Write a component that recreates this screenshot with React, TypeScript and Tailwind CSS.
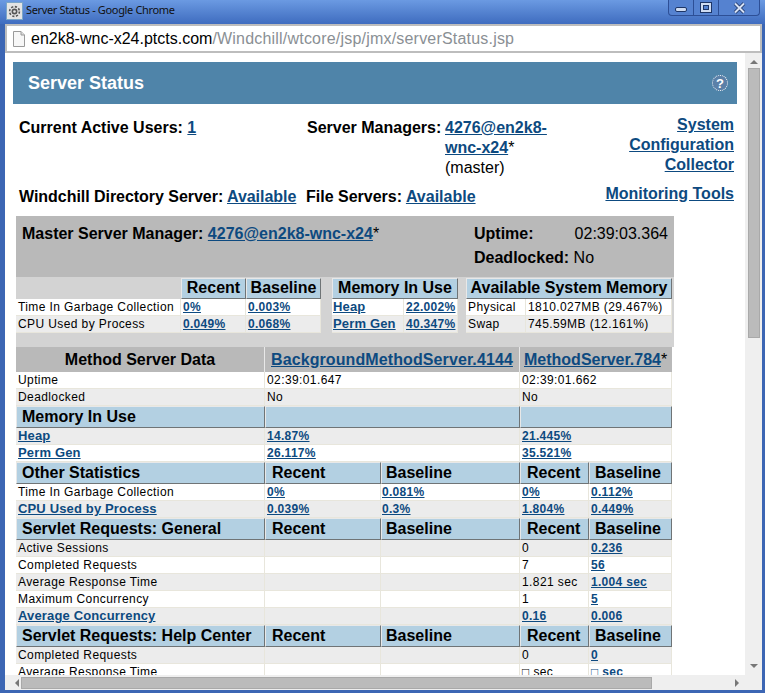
import { ReactNode } from "react";

type Cell = { text?: string; link?: boolean; suffix?: string };
type Row = { kind: "head" | "data"; cells: Cell[] };

const t = (text: string): Cell => ({ text });
const l = (text: string): Cell => ({ text, link: true });
const e: Cell = {};

const methodRows: Row[] = [
  { kind: "data", cells: [t("Uptime"), t("02:39:01.647"), t("02:39:01.662")] },
  { kind: "data", cells: [t("Deadlocked"), t("No"), t("No")] },
  { kind: "head", cells: [t("Memory In Use"), e, e] },
  { kind: "data", cells: [l("Heap"), l("14.87%"), l("21.445%")] },
  { kind: "data", cells: [l("Perm Gen"), l("26.117%"), l("35.521%")] },
  { kind: "head", cells: [t("Other Statistics"), t("Recent"), t("Baseline"), t("Recent"), t("Baseline")] },
  { kind: "data", cells: [t("Time In Garbage Collection"), l("0%"), l("0.081%"), l("0%"), l("0.112%")] },
  { kind: "data", cells: [l("CPU Used by Process"), l("0.039%"), l("0.3%"), l("1.804%"), l("0.449%")] },
  { kind: "head", cells: [t("Servlet Requests: General"), t("Recent"), t("Baseline"), t("Recent"), t("Baseline")] },
  { kind: "data", cells: [t("Active Sessions"), e, e, t("0"), l("0.236")] },
  { kind: "data", cells: [t("Completed Requests"), e, e, t("7"), l("56")] },
  { kind: "data", cells: [t("Average Response Time"), e, e, t("1.821 sec"), l("1.004 sec")] },
  { kind: "data", cells: [t("Maximum Concurrency"), e, e, t("1"), l("5")] },
  { kind: "data", cells: [l("Average Concurrency"), e, e, l("0.16"), l("0.006")] },
  { kind: "head", cells: [t("Servlet Requests: Help Center"), t("Recent"), t("Baseline"), t("Recent"), t("Baseline")] },
  { kind: "data", cells: [t("Completed Requests"), e, e, t("0"), l("0")] },
  { kind: "data", cells: [t("Average Response Time"), e, e, t("□ sec"), l("□ sec")] },
];

const headPad = ["pl-[5px]", "pl-[6px]", "pl-[4px]", "pl-[6px]", "pl-[5px]"];

const A = ({ children, className = "" }: { children: ReactNode; className?: string }) => (
  <a href="#" className={`text-[#0d4a80] underline ${className}`}>
    {children}
  </a>
);

// bold link used for row labels, a touch larger than the values
const LabelLink = ({ children }: { children: ReactNode }) => (
  <A className="text-[13px] font-bold tracking-[0.15px]">{children}</A>
);

const Th = ({ children, className = "", colSpan }: { children?: ReactNode; className?: string; colSpan?: number }) => (
  <td
    colSpan={colSpan}
    className={`border-t border-l border-t-[#e8e8e8] border-l-[#e8e8e8] border-r border-b border-r-[#6f7476] border-b-[#6f7476] bg-[#b3d0e2] p-0 text-[16px] font-bold leading-[18px] whitespace-nowrap text-black ${className}`}
  >
    {children}
  </td>
);

const Td = ({ children, className = "pl-[2px]", colSpan }: { children?: ReactNode; className?: string; colSpan?: number }) => (
  <td
    colSpan={colSpan}
    className={`h-[17px] border-r border-b border-[#e8e6dc] py-0 pr-[2px] text-[12px] leading-[16px] tracking-[0.4px] whitespace-nowrap ${className}`}
  >
    {children}
  </td>
);

function MethodRow({ row, index }: { row: Row; index: number }) {
  const wide = row.cells.length === 3;
  const stripe = index % 2 === 0 ? "bg-white" : "bg-[#ececec]";
  if (row.kind === "head") {
    return (
      <tr>
        {row.cells.map((c, i) => (
          <Th key={i} colSpan={wide && i > 0 ? 2 : undefined} className={`h-[22px] ${headPad[i]}`}>
            {c.text}
          </Th>
        ))}
      </tr>
    );
  }
  return (
    <tr className={stripe}>
      {row.cells.map((c, i) => (
        <Td key={i} colSpan={wide && i > 0 ? 2 : undefined} className={!wide && i === 2 ? "pl-[1px]" : "pl-[2px]"}>
          {c.link && i === 0 && <LabelLink>{c.text}</LabelLink>}
          {c.link && i > 0 && <A className="font-bold tracking-[0.3px]">{c.text}</A>}
          {!c.link && c.text}
        </Td>
      ))}
    </tr>
  );
}

function SummaryTables() {
  return (
    <div className="flex h-[70px] bg-[#d3d3d3] pt-px">
      <table className="w-[305px] table-fixed border-separate border-spacing-0 self-start">
        <colgroup>
          <col className="w-[165px]" />
          <col className="w-[65px]" />
          <col className="w-[75px]" />
        </colgroup>
        <tbody>
          <tr>
            <td />
            <Th className="h-[21px] pb-px text-center">Recent</Th>
            <Th className="h-[21px] pb-px text-center">Baseline</Th>
          </tr>
          <tr className="bg-white">
            <Td>Time In Garbage Collection</Td>
            <Td><A className="font-bold tracking-[0.3px]">0%</A></Td>
            <Td><A className="font-bold tracking-[0.3px]">0.003%</A></Td>
          </tr>
          <tr className="bg-[#ececec]">
            <Td>CPU Used by Process</Td>
            <Td><A className="font-bold tracking-[0.3px]">0.049%</A></Td>
            <Td><A className="font-bold tracking-[0.3px]">0.068%</A></Td>
          </tr>
        </tbody>
      </table>
      <table className="ml-[11px] w-[126px] table-fixed border-separate border-spacing-0 self-start">
        <colgroup>
          <col className="w-[72px]" />
          <col className="w-[54px]" />
        </colgroup>
        <tbody>
          <tr>
            <Th colSpan={2} className="h-[21px] pb-px text-center">Memory In Use</Th>
          </tr>
          <tr className="bg-white">
            <Td className="pl-[1px]"><LabelLink>Heap</LabelLink></Td>
            <Td><A className="font-bold tracking-[0.3px]">22.002%</A></Td>
          </tr>
          <tr className="bg-[#ececec]">
            <Td className="pl-[1px]"><LabelLink>Perm Gen</LabelLink></Td>
            <Td><A className="font-bold tracking-[0.3px]">40.347%</A></Td>
          </tr>
        </tbody>
      </table>
      <table className="ml-[8px] w-[206px] table-fixed border-separate border-spacing-0 self-start">
        <colgroup>
          <col className="w-[60px]" />
          <col className="w-[146px]" />
        </colgroup>
        <tbody>
          <tr>
            <Th colSpan={2} className="h-[21px] pb-px text-center">Available System Memory</Th>
          </tr>
          <tr className="bg-white">
            <Td>Physical</Td>
            <Td>1810.027MB (29.467%)</Td>
          </tr>
          <tr className="bg-[#ececec]">
            <Td>Swap</Td>
            <Td>745.59MB (12.161%)</Td>
          </tr>
        </tbody>
      </table>
    </div>
  );
}

function TitleBar() {
  return (
    <div className="flex h-[24px] shrink-0 items-start bg-gradient-to-b from-[#6b9ae2] to-[#3f6cbf] pl-[6px] pr-[5px]">
      <div className="mt-[2px] flex h-[18px] w-[17px] items-center justify-center border border-[#7aa5c8] bg-[#e4e4e4]">
        <svg width="13" height="13" viewBox="0 0 24 24" fill="none" stroke="#555" strokeWidth="3">
          <circle cx="12" cy="12" r="4" />
          <circle cx="12" cy="12" r="9" strokeDasharray="4 3" />
        </svg>
      </div>
      <span className="ml-[3px] mt-[2px] font-['Noto_Sans',sans-serif] text-[11px] leading-[16px] tracking-[-0.35px] whitespace-nowrap text-[#111]">
        Server Status - Google Chrome
      </span>
      <div className="ml-auto flex h-[16px] w-[92px] overflow-hidden rounded-b-[4px] border border-t-0 border-[#2d4f96] bg-[#5582d0]">
        <div className="flex w-[25px] items-center justify-center border-r border-[#2d4f96]">
          <div className="mt-[3px] h-[5px] w-[12px] rounded-[2px] border border-[#1d3566] bg-[#cfdcf2]" />
        </div>
        <div className="flex w-[25px] items-center justify-center border-r border-[#2d4f96]">
          <div className="flex h-[11px] w-[12px] items-center justify-center border border-[#1d3566] bg-[#cfdcf2]">
            <div className="h-[5px] w-[6px] border border-[#1d3566] bg-[#5582d0]" />
          </div>
        </div>
        <div className="flex flex-1 items-center justify-center">
          <svg width="13" height="12" viewBox="0 0 13 12">
            <path d="M2 1.5 L11 10.5 M11 1.5 L2 10.5" stroke="#1d3566" strokeWidth="3.6" />
            <path d="M2 1.5 L11 10.5 M11 1.5 L2 10.5" stroke="#d6e2f6" strokeWidth="2" />
          </svg>
        </div>
      </div>
    </div>
  );
}

function AddressBar() {
  return (
    <div className="mr-[3px] flex h-[29px] shrink-0 items-center border-2 border-[#bdbdbd] bg-white pl-[6px]">
      <svg width="12" height="16" viewBox="0 0 12 16" className="shrink-0">
        <path d="M0.5 0.5 H8 L11.5 4 V15.5 H0.5 Z" fill="#f7f7f7" stroke="#9a9a9a" />
        <path d="M8 0.5 V4 H11.5" fill="#ddd" stroke="#9a9a9a" />
      </svg>
      <span className="ml-[6px] text-[16px] leading-[24px] whitespace-nowrap">
        <span className="text-black">en2k8-wnc-x24.ptcts.com</span>
        <span className="tracking-[0.2px] text-[#8a8f94]">/Windchill/wtcore/jsp/jmx/serverStatus.jsp</span>
      </span>
    </div>
  );
}

function Triangle({ points, className }: { points: string; className?: string }) {
  return (
    <svg width="8" height="8" viewBox="0 0 8 8" className={className}>
      <polygon points={points} fill="#777" />
    </svg>
  );
}

export default function App() {
  return (
    <div className="flex h-[693px] w-[765px] flex-col overflow-hidden bg-[#3c66b4] font-['Liberation_Sans',Arial,sans-serif] text-black">
      <TitleBar />
      <div className="flex min-h-0 flex-1 flex-col pb-[3px] pl-[5px] pr-[0px]">
        <AddressBar />
        <div className="mr-[3px] flex min-h-0 flex-1 bg-white">
          <main className="min-w-0 flex-1 overflow-hidden pt-[9px]">
            <div className="mx-[8px] flex h-[42px] items-center justify-between bg-[#4f84a9] pl-[15px] pr-[9px]">
              <h1 className="text-[18px] font-bold text-white">Server Status</h1>
              <div className="flex h-[16px] w-[16px] items-center justify-center rounded-full border border-dotted border-white bg-[#5b80a8] text-[13px] font-bold leading-none text-white">
                ?
              </div>
            </div>

            <div className="relative h-[112px] text-[16px] leading-[20px]">
              <div className="flex pt-[14px]">
                <div className="ml-[14px] w-[288px] font-bold">
                  Current Active Users: <A>1</A>
                </div>
                <div className="w-[138px] font-bold">Server Managers:</div>
                <div className="w-[120px] font-bold">
                  <A>4276@en2k8-wnc-x24</A>
                  <span className="font-normal">*</span>
                  <div className="font-normal">(master)</div>
                </div>
                <div className="ml-auto mr-[11px] w-[130px] -translate-y-[3px] text-right font-bold">
                  <A>System Configuration Collector</A>
                  <div className="mt-[9px] whitespace-nowrap">
                    <A>Monitoring Tools</A>
                  </div>
                </div>
              </div>
              <div className="absolute bottom-[9px] left-[14px] flex font-bold">
                <div className="w-[287px] tracking-[-0.04px]">
                  Windchill Directory Server: <A>Available</A>
                </div>
                <div>
                  File Servers: <A>Available</A>
                </div>
              </div>
            </div>

            <div className="ml-[11px] w-[658px]">
              <div className="flex h-[61px] bg-[#b9b9b9] text-[16px] leading-[24px]">
                <div className="ml-[6px] mt-[6px] w-[452px] font-bold">
                  Master Server Manager: <A>4276@en2k8-wnc-x24</A>
                  <span className="font-normal">*</span>
                </div>
                <div className="mt-[6px] flex-1 pr-[6px]">
                  <div className="flex justify-between">
                    <b>Uptime:</b>
                    <span>02:39:03.364</span>
                  </div>
                  <div>
                    <b>Deadlocked:</b> No
                  </div>
                </div>
              </div>
              <SummaryTables />
              <table className="w-[656px] table-fixed border-separate border-spacing-0">
                <colgroup>
                  <col className="w-[249px]" />
                  <col className="w-[116px]" />
                  <col className="w-[139px]" />
                  <col className="w-[69px]" />
                  <col className="w-[83px]" />
                </colgroup>
                <tbody>
                  <tr className="bg-[#b9b9b9] text-[16px] font-bold">
                    <td className="h-[25px] border-r border-[#e8e8e8] p-0 text-center">Method Server Data</td>
                    <td colSpan={2} className="border-r border-[#e8e8e8] pl-[6px] whitespace-nowrap tracking-[0.1px]">
                      <A>BackgroundMethodServer.4144</A>
                    </td>
                    <td colSpan={2} className="pl-[4px] whitespace-nowrap">
                      <A>MethodServer.784</A>
                      <span className="font-normal">*</span>
                    </td>
                  </tr>
                  {methodRows.map((row, i) => (
                    <MethodRow key={i} row={row} index={i} />
                  ))}
                </tbody>
              </table>
            </div>
          </main>

          <div className="flex w-[17px] shrink-0 flex-col items-center bg-[#efefef] pt-[5px]">
            <Triangle points="4,2 8,6 0,6" />
            <div className="mt-[2px] h-[270px] w-[12px] border border-[#a9a9a9] bg-[#bbbbbb]" />
            <Triangle points="0,2 8,2 4,6" className="mt-auto mb-[5px]" />
          </div>
        </div>
        <div className="mr-[3px] flex h-[15px] shrink-0 items-center bg-[#efefef] pl-[8px] pr-[21px]">
          <Triangle points="6,0 6,8 2,4" />
          <div className="h-[12px] w-[631px] border border-[#a9a9a9] bg-[#bbbbbb]" />
          <Triangle points="2,0 2,8 6,4" className="ml-auto" />
        </div>
      </div>
    </div>
  );
}
